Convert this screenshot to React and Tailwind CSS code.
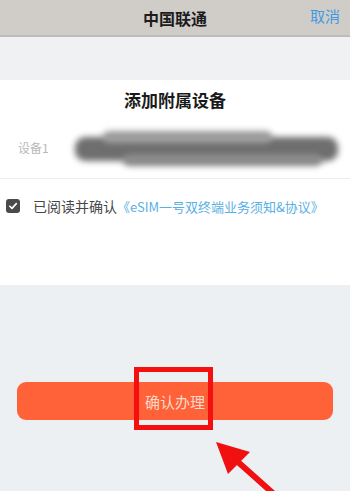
import React from "react";

export default function App() {
  const font = { fontFamily: '"Noto Sans CJK SC", "Noto Sans", sans-serif' };
  return (
    <div className="relative w-[350px] h-[491px] overflow-hidden bg-[#edf0f3]" style={font}>
      {/* header */}
      <div className="relative h-[37px] bg-[#d0cdc9] border-b-2 border-[#bfbcb8] flex items-center justify-center">
        <span className="text-[16px] font-bold text-[#1c1c1c] leading-none">中国联通</span>
        <span className="absolute right-[10px] top-[8px] text-[15px] text-[#3f9ae0] leading-none">取消</span>
      </div>
      {/* gray band */}
      <div className="h-[43px] bg-[#eff1f3]" />
      {/* white card */}
      <div className="bg-white h-[205px] flex flex-col">
        <div className="h-[38px] flex items-center justify-center">
          <span className="text-[17px] font-bold text-[#1a1a1a] leading-none">添加附属设备</span>
        </div>
        <div className="h-[61px] flex items-center border-b border-[#ececec]">
          <span className="ml-[18px] text-[12px] text-[#b8b8b8] w-[55px] leading-none">设备1</span>
          <div className="relative flex-1 h-[40px] mr-[8px]">
            <div className="absolute left-[2px] right-[4px] top-[9px] h-[24px] bg-[#6e6e6e] rounded-[10px] blur-[3px]" />
            <div className="absolute left-[30px] right-[70px] top-[3px] h-[12px] bg-[#9c9c9c] rounded-full blur-[3px]" />
            <div className="absolute left-[50px] right-[20px] top-[26px] h-[12px] bg-[#8a8a8a] rounded-full blur-[3px]" />
          </div>
        </div>
        <div className="h-[54px] flex items-center">
          <div className="ml-[6px] w-[14px] h-[14px] rounded-[3px] bg-[#4a4a4a] flex items-center justify-center">
            <svg width="10" height="10" viewBox="0 0 10 10">
              <path d="M1.8 5.2 L4 7.4 L8.3 2.6" stroke="white" strokeWidth="1.6" fill="none" strokeLinecap="round" strokeLinejoin="round" />
            </svg>
          </div>
          <span className="ml-[13px] text-[14px] text-[#474747] leading-none whitespace-nowrap">已阅读并确认</span>
          <span className="text-[13px] text-[#58b0e4] leading-none whitespace-nowrap">《eSIM一号双终端业务须知&amp;协议》</span>
        </div>
      </div>
      {/* button area */}
      <div className="pt-[97px] px-[17px]">
        <div className="h-[38px] rounded-[9px] bg-[#ff6238] flex items-center justify-center">
          <span className="text-[15px] text-[#fcd9c9] leading-none">确认办理</span>
        </div>
      </div>
      {/* annotation box */}
      <div className="absolute left-[134px] top-[367px] w-[79px] h-[63px] border-[5px] border-[#f50f0f]" />
      {/* annotation arrow */}
      <svg className="absolute left-0 top-0" width="350" height="491" viewBox="0 0 350 491">
        <line x1="238" y1="462" x2="275" y2="495" stroke="#f01010" strokeWidth="6" />
        <polygon points="216,442 250,452 228,474" fill="#f01010" />
      </svg>
    </div>
  );
}
